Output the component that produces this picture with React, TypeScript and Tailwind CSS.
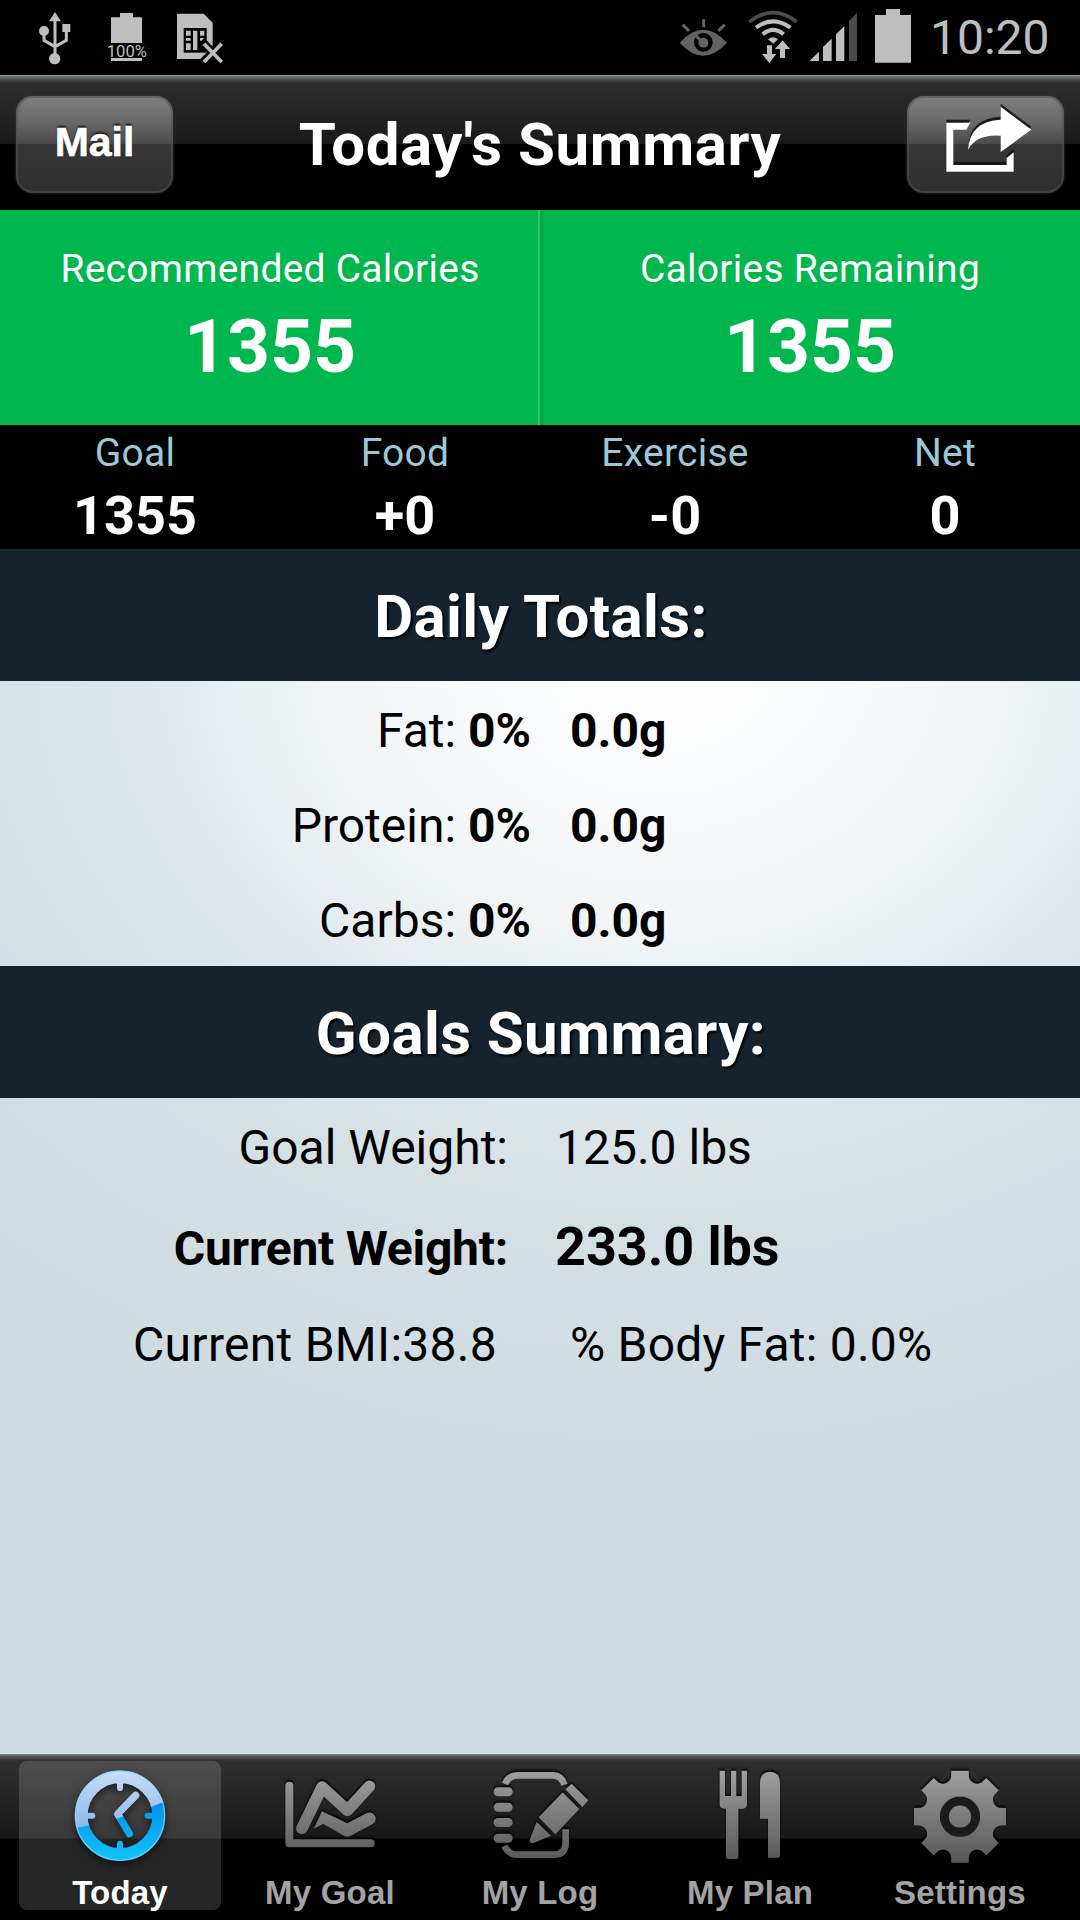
import type { ReactNode } from 'react';

interface Macro {
  label: string;
  percent: string;
  grams: string;
}

interface Tab {
  label: string;
  icon: ReactNode;
}

const stats = [
  { label: 'Goal', value: '1355' },
  { label: 'Food', value: '+0' },
  { label: 'Exercise', value: '-0' },
  { label: 'Net', value: '0' },
];

const macros: Macro[] = [
  { label: 'Fat:', percent: '0%', grams: '0.0g' },
  { label: 'Protein:', percent: '0%', grams: '0.0g' },
  { label: 'Carbs:', percent: '0%', grams: '0.0g' },
];

function StatusBar() {
  return (
    <div className="flex h-[75px] bg-black text-[#bebebe]">
      {/* usb */}
      <svg viewBox="114 0 102 225" className="ml-[38px] h-[75px] w-[34px]" fill="currentColor">
        <path d="M147 64L165 36L183 64Z" />
        <circle cx="132" cy="93" r="15" />
        <rect x="187" y="72" width="24" height="24" />
        <circle cx="164" cy="176" r="17" />
        <path d="M165 60V165M132 93V121L165 140L199 121V90" fill="none" stroke="currentColor" strokeWidth="9" />
      </svg>

      {/* charge level */}
      <svg viewBox="315 0 132 225" className="ml-[33px] h-[75px] w-[44px]" fill="currentColor">
        <path d="M333 52H360V39H399V52H426V129H333Z" />
        <text x="320" y="170" fontSize="51" textLength="121" lengthAdjust="spacingAndGlyphs">100%</text>
        <rect x="333" y="174" width="93" height="9" />
      </svg>

      {/* no sim */}
      <svg viewBox="525 0 150 225" className="ml-[26px] h-[75px] w-[50px]" fill="currentColor">
        <path d="M531 41H611L638 68V177H531Z" />
        <path d="M551 84H620V158H551Z" fill="#000" />
        <path d="M558 92H572V107H558ZM558 114H572V122H558ZM558 130H572V150H558ZM579 92H592V150H579ZM600 92H613V107H600ZM600 114H613V122H600Z" />
        <path d="M604 123L672 192M672 123L596 200" stroke="#000" strokeWidth="25" />
        <path d="M612 131L665 186M665 131L612 186" stroke="currentColor" strokeWidth="11" />
      </svg>

      {/* smart stay eye */}
      <svg viewBox="111 0 156 225" className="ml-auto h-[75px] w-[52px] text-[#626262]" fill="currentColor">
        <path d="M119 128Q190 50 261 128Q190 206 119 128Z" />
        <circle cx="190" cy="127" r="28" fill="#000" />
        <circle cx="190" cy="128" r="15" />
        <path d="M166 106L186 124" stroke="currentColor" strokeWidth="9" />
        <path d="M128 74L147 93M191 58V82M254 74L235 93" stroke="currentColor" strokeWidth="9" />
      </svg>

      {/* wifi */}
      <svg viewBox="321 0 156 225" className="ml-[18px] h-[75px] w-[52px]" fill="none" stroke="currentColor">
        <path d="M328 65Q399 11 470 65" stroke="#4c4c4c" strokeWidth="11" />
        <path d="M348 83Q399 45 451 83" strokeWidth="12" />
        <path d="M368 103Q399 76 431 103" strokeWidth="12" />
        <path d="M384 118Q399 105 414 118L400 131Z" fill="currentColor" stroke="none" />
        <path
          d="M381 136H396V162H409L388 189L366 162H381ZM420 174V147H405L428 121L450 147H435V174Z"
          fill="currentColor"
          stroke="none"
        />
      </svg>

      {/* signal */}
      <svg viewBox="504 0 150 225" className="ml-[9px] h-[75px] w-[50px]" fill="currentColor">
        <path d="M508 183L537 155V183ZM549 183V141L575 116V183ZM588 183V103L613 78V183Z" />
        <path d="M627 183V64L651 38V183Z" fill="#4c4c4c" />
      </svg>

      {/* battery */}
      <svg viewBox="702 0 114 225" className="ml-[16px] h-[75px] w-[38px]" fill="currentColor">
        <path d="M705 45H738V27H780V45H813V188H705Z" />
      </svg>

      <div className="ml-[18px] w-[150px] whitespace-nowrap text-[48px] leading-[76px]">10:20</div>
    </div>
  );
}

const buttonClass =
  'h-[97px] w-[157px] rounded-[17px] bg-[linear-gradient(#818181_0%,#6a6a6a_25%,#4b4b4b_49%,#363636_50%,#2f2f2f_100%)] shadow-[inset_0_0_0_2px_rgba(80,80,80,0.6),0_0_2px_1px_rgba(60,60,60,0.45)]';

function Header() {
  return (
    <div className="flex h-[135px] items-start justify-between bg-[linear-gradient(#979b9b_0px,#62686a_2px,#43484a_5px,#2e2e2e_8px,#191919_69px,#000_69px)] px-[16px] pt-[21px]">
      <button className={`${buttonClass} pb-[3px] font-['Liberation_Sans',sans-serif] text-[41px] font-bold text-white [-webkit-text-stroke:0.6px_#fff] [text-shadow:0_-2px_2px_rgba(0,0,0,0.8)]`}>
        Mail
      </button>
      <h1 className="text-[60px] font-bold leading-[97px] tracking-[0.57px] text-white">Today's Summary</h1>
      <button className={buttonClass}>
        <svg viewBox="802 286 471 291" className="h-[97px] w-[157px] drop-shadow-[0_-3px_0_rgba(20,20,20,0.9)]" fill="#fff">
          <path d="M920 366H992L980 387H941V493H1101V472L1122 455V513H920Z" />
          <path d="M1083 318L1175 387L1083 454V405Q1010 400 985 447Q990 362 1083 357Z" />
        </svg>
      </button>
    </div>
  );
}

function CalorieBox({ label, value, className }: { label: string; value: string; className: string }) {
  return (
    <div className={`w-1/2 bg-[#00b74f] pt-[34px] text-center text-white ${className}`}>
      <div className="text-[39px] leading-[50px] tracking-[0.25px]">{label}</div>
      <div className="mt-[7px] text-[75px] font-bold leading-[90px]">{value}</div>
    </div>
  );
}

function SectionTitle({ children }: { children: ReactNode }) {
  return (
    <h2 className="h-[132px] bg-[#15232f] pl-[2px] pt-[2px] text-center text-[60px] font-bold leading-[132px] tracking-[0.4px] text-white [text-shadow:2px_2px_2px_rgba(0,0,0,0.9)]">
      {children}
    </h2>
  );
}

// One tooth plus the concave gap after it, repeated every 45 degrees
function gearPath(cx: number, cy: number) {
  const pt = (x: number, y: number, a: number) => {
    const c = Math.cos(a);
    const s = Math.sin(a);
    return `${(cx + x * c - y * s).toFixed(1)} ${(cy + x * s + y * c).toFixed(1)}`;
  };
  let d = '';
  for (let i = 0; i < 8; i++) {
    const a = (i * Math.PI) / 4;
    const next = a + Math.PI / 4;
    d += `${i === 0 ? 'M' : 'L'}${pt(-26, -138, a)}L${pt(26, -138, a)}L${pt(27, -118, a)}A25 25 0 0 0 ${pt(-27, -118, next)}`;
  }
  return d + 'Z';
}

function TabIcon({ viewBox, children }: { viewBox: string; children: ReactNode }) {
  return (
    <svg viewBox={viewBox} className="mx-auto h-[100px] w-[100px] drop-shadow-[0_-2px_1px_rgba(0,0,0,0.85)]" fill="url(#tabGray)">
      {children}
    </svg>
  );
}

const tabs: Tab[] = [
  {
    label: 'Today',
    icon: (
      <svg viewBox="210 78 300 300" className="mx-auto h-[100px] w-[100px] drop-shadow-[0_3px_4px_rgba(0,0,0,0.6)]">
        <mask id="clockMask" maskUnits="userSpaceOnUse" x="210" y="78" width="300" height="300">
          <g fill="none" stroke="#fff" strokeLinecap="round" strokeLinejoin="round">
            <circle cx="360" cy="227" r="116" strokeWidth="38" />
            <path d="M360 120V144M360 334V311M253 227H277M467 227H443" strokeWidth="18" />
            <path d="M407 166L353 222L388 281" strokeWidth="22" />
          </g>
        </mask>
        <g mask="url(#clockMask)">
          <rect x="210" y="78" width="300" height="300" fill="url(#clockLight)" />
          <path d="M210 268Q370 240 510 178V378H210Z" fill="url(#clockBlue)" />
        </g>
        <circle cx="360" cy="227" r="134" fill="none" stroke="#8fdcff" strokeOpacity="0.7" strokeWidth="4" />
      </svg>
    ),
  },
  {
    label: 'My Goal',
    icon: (
      <TabIcon viewBox="840 78 300 300">
        <g fill="none" stroke="url(#tabGray)" strokeLinecap="round" strokeLinejoin="round">
          <path d="M868 137V310H1112" strokeWidth="24" />
          <path d="M906 265L966 141L1042 211L1108 139" strokeWidth="35" />
        </g>
        <path d="M941 266L966 214L1042 250L1099 220A18 18 0 0 1 1118 252L1052 287Q1042 292 1032 287L970 252Z" />
      </TabIcon>
    ),
  },
  {
    label: 'My Log',
    icon: (
      <TabIcon viewBox="210 78 300 300">
        <path
          d="M255 132Q266 106 292 106H400Q424 106 433 134M253 318Q266 344 292 344H400Q437 344 437 308V268"
          fill="none"
          stroke="url(#tabGray)"
          strokeWidth="20"
        />
        <rect x="221" y="142" width="57" height="27" rx="13" />
        <rect x="221" y="188" width="57" height="27" rx="13" />
        <rect x="221" y="234" width="57" height="27" rx="13" />
        <rect x="221" y="281" width="57" height="27" rx="13" />
        <path d="M436 148L455 131L505 181L487 201Z" />
        <path d="M428 157L478 207L406 283L356 232Z" />
        <path d="M350 245L393 287L340 309Q328 310 329 299Z" />
      </TabIcon>
    ),
  },
  {
    label: 'My Plan',
    icon: (
      <TabIcon viewBox="60 78 300 300">
        <path d="M119 92H135V168H153V92H169V168H185V92H201V192Q201 206 188 206H175V350Q175 357 168 357H145Q138 357 138 350V206H132Q119 206 119 192Z" />
        <path d="M240 128Q241 95 270 95Q299 95 300 128V346Q300 353 293 353H264V236H240Z" />
      </TabIcon>
    ),
  },
  {
    label: 'Settings',
    icon: (
      <TabIcon viewBox="690 78 300 300">
        <path d={gearPath(840, 230)} />
        <circle cx="840" cy="230" r="47" fill="none" stroke="#1b1b1b" strokeWidth="27" />
      </TabIcon>
    ),
  },
];

function TabBar({ active }: { active: string }) {
  return (
    <div className="flex h-[166px] bg-[linear-gradient(#8b8d8e_0px,#5a5b5b_2px,#474747_4px,#2f2f2f_7px,#171717_84px,#000_85px)] px-[15px] pt-[7px]">
      <svg className="absolute h-0 w-0">
        <defs>
          <linearGradient id="tabGray" gradientUnits="userSpaceOnUse" x1="0" y1="90" x2="0" y2="360">
            <stop offset="0" stopColor="#a0a0a0" />
            <stop offset="1" stopColor="#595959" />
          </linearGradient>
          <linearGradient id="clockLight" x1="0" y1="0" x2="0" y2="1">
            <stop offset="0" stopColor="#cfe0f6" />
            <stop offset="0.6" stopColor="#8bb9ee" />
          </linearGradient>
          <linearGradient id="clockBlue" x1="0" y1="0" x2="0" y2="1">
            <stop offset="0" stopColor="#0091ea" />
            <stop offset="0.9" stopColor="#0fc2fb" />
          </linearGradient>
        </defs>
      </svg>
      {tabs.map(tab => (
        <div
          key={tab.label}
          className={`mx-[4px] h-[149px] w-[202px] rounded-[8px] pt-[5px] text-center ${
            tab.label === active ? 'bg-white/15 text-white' : 'text-[#a3a3a3]'
          }`}
        >
          {tab.icon}
          <div className="mt-[8px] whitespace-nowrap font-['Liberation_Sans',sans-serif] text-[33px] font-bold leading-[38px] tracking-[0.2px]">
            {tab.label}
          </div>
        </div>
      ))}
    </div>
  );
}

export default function App() {
  return (
    <div className="flex h-[1920px] w-[1080px] flex-col overflow-hidden bg-black font-[Roboto,sans-serif]">
      <StatusBar />
      <Header />

      <div className="flex h-[215px]">
        <CalorieBox label="Recommended Calories" value="1355" className="shadow-[inset_-2px_0_0_#2cc56c]" />
        <CalorieBox label="Calories Remaining" value="1355" className="shadow-[inset_3px_0_1px_#08a548]" />
      </div>

      <div className="grid h-[124px] grid-cols-4 pt-[6px] text-center">
        {stats.map(stat => (
          <div key={stat.label}>
            <div className="text-[39px] leading-[44px] tracking-[0.25px] text-[#9cc8d6]">{stat.label}</div>
            <div className="mt-[11px] text-[54px] font-bold leading-[60px] text-white">{stat.value}</div>
          </div>
        ))}
      </div>

      <div className="flex-1 bg-[radial-gradient(990px_800px_at_660px_110px,#ffffff_0%,#fafbfc_15%,#f1f5f6_34%,#dfe7ec_53%,#d5e0e5_70%,#cfdce1_100%)] text-[48px] text-black">
        <SectionTitle>Daily Totals:</SectionTitle>
        <div className="h-[285px] pt-[2px]">
          {macros.map(macro => (
            <div key={macro.label} className="flex h-[95px] leading-[95px]">
              <div className="w-[531px] text-right">
                {macro.label} <b>{macro.percent}</b>
              </div>
              <b className="ml-[39px]">{macro.grams}</b>
            </div>
          ))}
        </div>

        <SectionTitle>Goals Summary:</SectionTitle>
        <div className="flex h-[95px] pt-[2px] leading-[95px]">
          <div className="w-[508px] text-right">Goal Weight:</div>
          <div className="ml-[48px]">125.0 lbs</div>
        </div>
        <div className="flex h-[107px] items-baseline font-bold leading-[107px]">
          <div className="w-[508px] text-right tracking-[-0.25px]">Current Weight:</div>
          <div className="ml-[47px] text-[54px] tracking-[-0.1px]">233.0 lbs</div>
        </div>
        <div className="flex h-[89px] leading-[89px]">
          <div className="w-[497px] text-right tracking-[0.28px]">Current BMI:38.8</div>
          <div className="ml-[73px] tracking-[0.22px]">% Body Fat: 0.0%</div>
        </div>
      </div>

      <TabBar active="Today" />
    </div>
  );
}
